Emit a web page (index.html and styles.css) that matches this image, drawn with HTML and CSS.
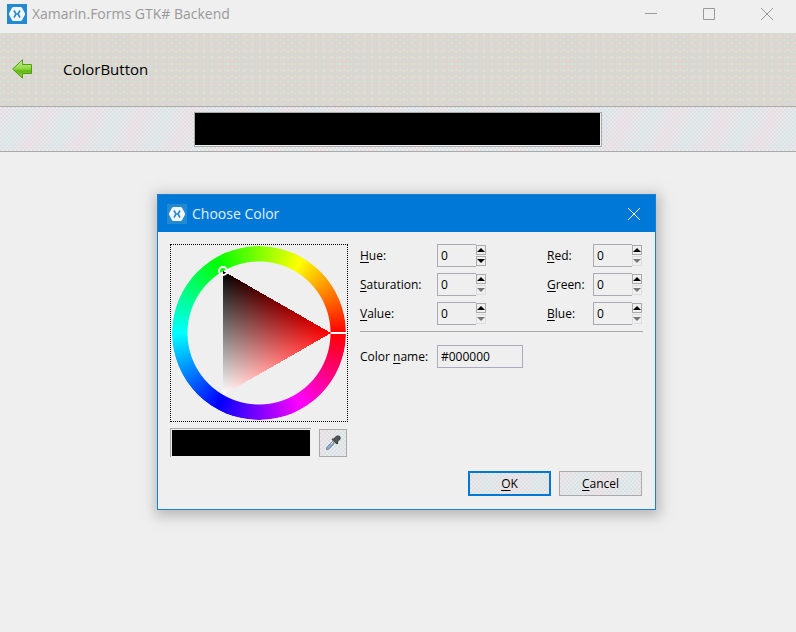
FILE: index.html
```html
<!DOCTYPE html>
<html lang="en">
<head>
<meta charset="utf-8">
<title>Xamarin.Forms GTK# Backend</title>
<link rel="stylesheet" href="styles.css">
</head>
<body>
<svg class="defs" aria-hidden="true">
  <symbol id="logo" viewBox="0 0 20 20">
    <rect class="logo-tile" width="20" height="20"/>
    <path fill="#f4f7f9" d="M6.500 3h7q1 0 1.600 1l2.700 5q.5 1 0 2l-2.700 5q-.6 1-1.600 1h-7q-1 0-1.600-1l-2.700-5q-.5-1 0-2l2.700-5q.6-1 1.600-1z"/>
    <path class="logo-x" fill="none" stroke-width="1.600" d="M7 6.500 9 10l-2 3.500M13 6.500 11 10l2 3.500M9 10h2"/>
  </symbol>
</svg>

<header class="titlebar">
  <svg class="app-icon"><use href="#logo"/></svg>
  <span class="app-title">Xamarin.Forms GTK# Backend</span>
  <div class="window-controls">
    <button type="button" aria-label="Minimize"><svg viewBox="0 0 12 12"><path d="M0 5.500h12"/></svg></button>
    <button type="button" aria-label="Maximize"><svg viewBox="0 0 12 12"><path d="M.5.5h11v11H.5z"/></svg></button>
    <button type="button" aria-label="Close"><svg viewBox="0 0 12 12"><path d="M0 0l12 12M12 0 0 12"/></svg></button>
  </div>
</header>

<nav class="navbar">
  <button class="back" type="button" aria-label="Back">
    <svg viewBox="0 0 22 20">
      <defs><linearGradient id="leaf" x1="0" y1="0" x2="0" y2="1"><stop offset="0" stop-color="#d0f0a0"/><stop offset=".5" stop-color="#8ed63e"/><stop offset=".6" stop-color="#62b814"/><stop offset="1" stop-color="#8ed63e"/></linearGradient></defs>
      <path fill="url(#leaf)" stroke="#4ba00e" d="M.7 10 10.500 .8v4.700H19.500v9H10.500v4.700z"/>
    </svg>
  </button>
  <h1>ColorButton</h1>
</nav>

<main class="strip">
  <button class="color-button" type="button" aria-label="Pick a color"></button>
</main>

<form class="dialog" role="dialog" aria-labelledby="dialog-title">
  <header class="dialog-bar">
    <svg class="app-icon"><use href="#logo"/></svg>
    <h2 id="dialog-title">Choose Color</h2>
    <button class="dialog-close" type="button" aria-label="Close"><svg viewBox="0 0 12 12"><path d="M0 0l12 12M12 0 0 12"/></svg></button>
  </header>
  <div class="dialog-body">
    <section class="picker">
      <div class="wheel">
        <div class="ring"></div>
        <svg class="triangle" viewBox="0 0 176 176">
          <defs>
            <linearGradient id="shade" gradientUnits="userSpaceOnUse" x1="52" y1="26" x2="106" y2="119"><stop offset="0" stop-color="#000"/><stop offset="1" stop-color="#f00"/></linearGradient>
            <linearGradient id="tint" gradientUnits="userSpaceOnUse" x1="52" y1="150" x2="106" y2="57"><stop offset="0" stop-color="#0ff"/><stop offset="1" stop-color="#000"/></linearGradient>
          </defs>
          <path fill="url(#shade)" shape-rendering="crispEdges" d="M52 26 160 88 52 150z"/>
          <path class="tint" fill="url(#tint)" shape-rendering="crispEdges" d="M52 26 160 88 52 150z"/>
          <path stroke="#fff" stroke-width="2" d="M160 88h15"/>
          <circle cx="52" cy="26" r="4" fill="none" stroke="#fff" stroke-width="2"/>
        </svg>
      </div>
      <div class="sample-row">
        <div class="sample"></div>
        <button class="dropper" type="button" aria-label="Pick a color from the screen">
          <svg viewBox="0 0 16 16">
            <path fill="#7fb0dc" stroke="#888" d="M1.500 14.500v-2l6-6 2 2-6 6z"/>
            <path stroke="#eee" d="M6 9l2-2"/>
            <path fill="#555" stroke="#3a3a3a" d="M7 4.500 8 3.500l1 1C10 2 11 1 13 1s2.500 1 2 3c-.5 1.500-2 2-3 3l1 1-1 1z"/>
          </svg>
        </button>
      </div>
    </section>
    <section class="fields">
      <div class="channels">
        <label for="hue"><u>H</u>ue:</label>
        <div class="spin"><input id="hue" type="text" value="0"><button type="button" aria-label="Increase hue"></button><button class="down" type="button" aria-label="Decrease hue"></button></div>
        <label for="red"><u>R</u>ed:</label>
        <div class="spin"><input id="red" type="text" value="0"><button type="button" aria-label="Increase red"></button><button class="down" type="button" aria-label="Decrease red" disabled></button></div>
        <label for="saturation"><u>S</u>aturation:</label>
        <div class="spin"><input id="saturation" type="text" value="0"><button type="button" aria-label="Increase saturation"></button><button class="down" type="button" aria-label="Decrease saturation" disabled></button></div>
        <label for="green"><u>G</u>reen:</label>
        <div class="spin"><input id="green" type="text" value="0"><button type="button" aria-label="Increase green"></button><button class="down" type="button" aria-label="Decrease green" disabled></button></div>
        <label for="value"><u>V</u>alue:</label>
        <div class="spin"><input id="value" type="text" value="0"><button type="button" aria-label="Increase value"></button><button class="down" type="button" aria-label="Decrease value" disabled></button></div>
        <label for="blue"><u>B</u>lue:</label>
        <div class="spin"><input id="blue" type="text" value="0"><button type="button" aria-label="Increase blue"></button><button class="down" type="button" aria-label="Decrease blue" disabled></button></div>
      </div>
      <div class="name-row">
        <label for="name">Color <u>n</u>ame:</label>
        <input id="name" type="text" value="#000000">
      </div>
    </section>
  </div>
  <footer class="actions">
    <button class="primary" type="button"><u>O</u>K</button>
    <button type="button"><u>C</u>ancel</button>
  </footer>
</form>
</body>
</html>
```

FILE: styles.css
```css
* { box-sizing: border-box; }

body {
  margin: 0;
  min-height: 100vh;
  background: #efefef;
  color: #000;
  font: 12px/16px "Open Sans", "Noto Sans", sans-serif;
}

button, input { margin: 0; padding: 0; border: 0; border-radius: 0; background: none; color: inherit; font: inherit; }
svg { display: block; }
h1, h2 { margin: 0; font-weight: 400; }
u { text-underline-offset: 2px; text-decoration-skip-ink: none; }

.defs { position: absolute; width: 0; height: 0; }
.logo-tile { fill: #2389d3; }
.logo-x { stroke: #2389d3; }
.app-icon { flex: none; width: 20px; height: 20px; }

.titlebar { display: flex; align-items: center; gap: 5px; height: 33px; padding: 0 0 5px 7px; }
.app-title { color: #999; font-size: 14px; line-height: 20px; }
.window-controls { display: flex; margin-left: auto; }
.window-controls button { display: grid; place-items: center; width: 58px; height: 28px; }
.window-controls svg { width: 12px; height: 12px; fill: none; stroke: #999; }

.navbar {
  display: flex;
  align-items: center;
  gap: 29px;
  height: 74px;
  padding: 0 12px 2px;
  border-bottom: 1px solid #aaa;
  background-color: #dad7d3;
  background-image:
    radial-gradient(circle at 1px 1px, #c6f2c277 1px, transparent 1px),
    radial-gradient(circle at 4px 3px, #fbdccd88 1px, transparent 1px);
  background-size: 7px 6px, 8px 7px;
}
.back svg { width: 22px; height: 20px; }
.navbar h1 { font-size: 15px; line-height: 20px; }

.strip {
  display: flex;
  justify-content: center;
  padding: 5px 12px 4px;
  border-bottom: 1px solid #aaa;
}
.strip, .dropper, .actions button {
  background-color: #e3e3e5;
  background-image:
    repeating-linear-gradient(115deg, #f8d8e044, #cdeef044 22px, #f8d8e044 44px),
    repeating-conic-gradient(#d8d8dc77 0 25%, #f4f4f477 0 50%);
  background-size: auto, 4px 4px;
}
.color-button { width: 408px; max-width: 100%; height: 35px; border: 1px solid #aaa; box-shadow: inset -1px -1px #eee; background: #000; }

.dialog {
  position: absolute;
  top: 194px;
  left: 157px;
  width: 499px;
  border: 1px solid #1a80cf;
  background: #efefef;
  box-shadow: 1px 3px 12px 3px #8888;
}
.dialog-bar { display: flex; align-items: center; gap: 5px; height: 37px; padding: 0 15px 0 9px; background: #0078d7; color: #e3f0fa; }
.dialog-bar h2 { font-size: 14px; line-height: 20px; }
.dialog-close { margin-left: auto; }
.dialog-close svg { width: 12px; height: 12px; fill: none; stroke: #fff; overflow: visible; }

.dialog-body { display: grid; grid-template-columns: 178px 1fr; gap: 12px; padding: 12px; }
.wheel { display: grid; height: 178px; padding: 1px; outline: 1px dotted #000; outline-offset: -1px; }
.ring {
  grid-area: 1 / 1;
  margin: 1px;
  border-radius: 50%;
  background: conic-gradient(from 90deg, #f00, #f0f, #00f, #0ff, #0f0, #ff0, #f00);
  mask: radial-gradient(circle, transparent 71px, #000 72px);
}
.triangle { grid-area: 1 / 1; width: 176px; height: 176px; isolation: isolate; z-index: 1; }
.tint { mix-blend-mode: screen; }
.sample-row { display: flex; align-items: flex-start; gap: 8px; margin-top: 6px; padding-right: 1px; }
.sample { flex: 1; height: 29px; border: solid #aaa; border-width: 1px 0 0 1px; background: #000; box-shadow: inset 1px 1px #eee, inset -1px -1px #eee; }
.dropper { display: grid; place-items: center; width: 28px; height: 28px; margin-top: 1px; border: 1px solid #aaa; }
.dropper svg { width: 16px; height: 16px; }

.channels {
  display: grid;
  grid-template-columns: 77px 1fr 46px 50px;
  row-gap: 6px;
  align-items: center;
  padding-bottom: 6px;
  border-bottom: 1px solid #aaa;
}
.spin { display: grid; grid-template: 11px 11px / 39px 10px; height: 23px; }
.spin input { grid-row: 1 / 3; height: 23px; padding-left: 3px; border: 1px solid #aaaab4; border-right: 0; width: 39px; }
.spin button { display: grid; place-items: center; margin-top: 1px; height: 10px; border: 1px solid #aaa; background: #efefef; }
.spin button::before { content: ""; display: block; width: 8px; height: 4px; background: #000; clip-path: polygon(50% 0, 100% 100%, 0 100%); }
.spin .down::before { clip-path: polygon(0 0, 100% 0, 50% 100%); }
.spin button:disabled { border-color: #ddd; }
.spin button:disabled::before { background: #777; }

.name-row { display: grid; grid-template-columns: 77px 86px; align-items: center; margin-top: 13px; }
.name-row input { width: 86px; height: 23px; padding-left: 3px; border: 1px solid #aaaac0; }

.actions { display: flex; justify-content: flex-end; gap: 8px; padding: 2px 13px 13px; }
.actions button { width: 83px; height: 25px; border: 1px solid #aaa; }
.actions .primary { border: 2px solid #0078d7; }
```
